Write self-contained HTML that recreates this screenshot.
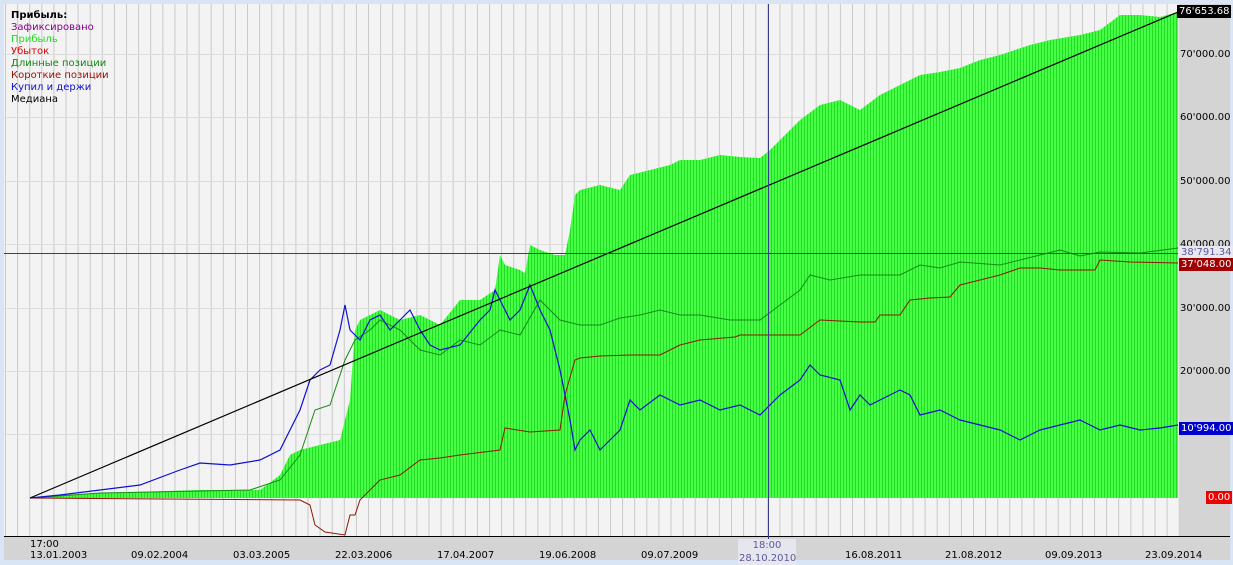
<!DOCTYPE html>
<html><head><meta charset="utf-8"><style>
html,body{margin:0;padding:0;background:#d9e5f4;}
body{width:1233px;height:564px;position:relative;overflow:hidden;font-family:"DejaVu Sans","Liberation Sans",sans-serif;font-size:10px;}
.lg{position:absolute;left:11px;line-height:12px;font-size:10px;}
.ax{position:absolute;font-size:10px;line-height:13px;}
.tag{position:absolute;left:1179px;font-size:10px;line-height:13px;padding:0 2px;}
</style></head><body>
<svg width="1233" height="564" style="position:absolute;left:0;top:0">
<defs>
<pattern id="vg" width="12.1" height="10" patternUnits="userSpaceOnUse" x="5"><rect width="12.1" height="10" fill="#f3f3f3"/><rect x="0" width="1" height="10" fill="#c9c9c9"/></pattern>
<pattern id="gp" width="3" height="10" patternUnits="userSpaceOnUse"><rect width="3" height="10" fill="#44ff44"/><rect width="1" height="10" fill="#28d828"/></pattern>
</defs>
<rect x="4" y="4" width="1175" height="532" fill="url(#vg)"/>
<g stroke="#dcdcdc" stroke-width="1">
<line x1="4" y1="54.5" x2="1178" y2="54.5"/><line x1="4" y1="117.5" x2="1178" y2="117.5"/><line x1="4" y1="181.5" x2="1178" y2="181.5"/><line x1="4" y1="244.5" x2="1178" y2="244.5"/><line x1="4" y1="308.5" x2="1178" y2="308.5"/><line x1="4" y1="371.5" x2="1178" y2="371.5"/><line x1="4" y1="434.5" x2="1178" y2="434.5"/>
</g>
<rect x="1179" y="4" width="51" height="532" fill="#d4d4d4"/>
<rect x="4" y="537" width="1226" height="23" fill="#d4d4d4"/>
<line x1="4" y1="536.5" x2="1230" y2="536.5" stroke="#000"/>
<polygon fill="url(#gp)" points="30,498 100,493 200,490 260,490 280,475 290,455 300,450 320,445 340,440 350,400 355,330 360,320 370,315 380,310 400,320 420,315 440,325 460,300 480,300 495,290 500,255 505,265 520,270 525,273 530,245 540,250 555,255 565,255 570,230 575,195 580,190 600,185 620,190 630,175 650,170 670,165 680,160 700,160 720,155 740,157 760,158 770,150 780,140 790,130 800,120 820,105 840,100 860,110 880,95 900,85 920,75 940,72 960,68 980,60 1000,55 1030,45 1050,40 1080,35 1100,30 1120,15 1140,15 1160,17 1178,12 1178,498"/>
<polyline fill="none" stroke="#148c14" stroke-width="1" points="30,498 100,493 250,490 280,480 300,455 315,410 330,405 345,360 355,340 370,330 380,320 400,330 420,350 440,355 460,340 480,345 500,330 520,335 540,300 560,320 580,325 600,325 620,318 640,315 660,310 680,315 700,315 730,320 760,320 780,305 800,290 810,275 830,280 860,275 900,275 920,265 940,268 960,262 1000,265 1040,255 1060,250 1080,256 1100,252 1140,253 1178,248"/>
<polyline fill="none" stroke="#8b1a00" stroke-width="1" points="30,498 300,500 310,505 315,525 325,532 345,535 350,515 355,515 360,500 370,490 380,480 400,475 420,460 440,458 460,455 500,450 505,428 530,432 560,430 565,395 575,360 580,358 600,356 630,355 660,355 680,345 700,340 735,337 740,335 800,335 820,320 860,322 875,322 880,315 900,315 910,300 930,298 950,297 960,285 980,280 1000,275 1020,268 1040,268 1060,270 1095,270 1100,260 1130,262 1178,263"/>
<polyline fill="none" stroke="#1010d0" stroke-width="1.2" points="30,498 60,495 100,490 140,485 180,470 200,463 230,465 260,460 280,450 290,430 300,410 310,380 320,370 330,365 340,330 345,305 350,330 360,340 370,320 380,315 390,330 400,320 410,310 420,330 430,345 440,350 460,345 480,320 490,310 495,290 500,300 510,320 520,310 530,285 540,310 550,330 560,370 570,420 575,450 580,440 590,430 600,450 610,440 620,430 630,400 640,410 660,395 680,405 700,400 720,410 740,405 760,415 780,395 800,380 810,365 820,375 840,380 850,410 860,395 870,405 880,400 900,390 910,395 920,415 940,410 960,420 980,425 1000,430 1020,440 1040,430 1060,425 1080,420 1100,430 1120,425 1140,430 1160,428 1178,425"/>
<line x1="30" y1="498" x2="1178" y2="12" stroke="#000" stroke-width="1.2"/>
<line x1="4" y1="253.5" x2="1178" y2="253.5" stroke="#3a3a8a"/>
<line x1="768.5" y1="4" x2="768.5" y2="545" stroke="#3a3a8a"/>
</svg>
<div class="lg" style="top:10px;font-weight:bold;color:#000">Прибыль:</div>
<div class="lg" style="top:22px;color:#8b008b">Зафиксировано</div>
<div class="lg" style="top:34px;color:#22dd22">Прибыль</div>
<div class="lg" style="top:46px;color:#dd0000">Убыток</div>
<div class="lg" style="top:58px;color:#118811">Длинные позиции</div>
<div class="lg" style="top:70px;color:#991100">Короткие позиции</div>
<div class="lg" style="top:82px;color:#1010cc">Купил и держи</div>
<div class="lg" style="top:94px;color:#000">Медиана</div>
<div class="ax" style="left:1180px;top:48px">70'000.00</div>
<div class="ax" style="left:1180px;top:111px">60'000.00</div>
<div class="ax" style="left:1180px;top:175px">50'000.00</div>
<div class="ax" style="left:1180px;top:238px">40'000.00</div>
<div class="ax" style="left:1180px;top:302px">30'000.00</div>
<div class="ax" style="left:1180px;top:365px">20'000.00</div>
<div class="tag" style="top:5px;background:#000;color:#fff;left:1177px">76'653.68</div>
<div class="tag" style="top:246px;background:#e8e8ee;color:#5a5a9a">38'791.34</div>
<div class="tag" style="top:258px;background:#a00000;color:#fff">37'048.00</div>
<div class="tag" style="top:422px;background:#0000cc;color:#fff">10'994.00</div>
<div class="tag" style="top:491px;background:#ee0000;color:#fff;left:1206px">0.00</div>
<div class="ax" style="left:30px;top:538px">17:00</div>
<div class="ax" style="left:30px;top:549px">13.01.2003</div>
<div class="ax" style="left:131px;top:549px">09.02.2004</div>
<div class="ax" style="left:233px;top:549px">03.03.2005</div>
<div class="ax" style="left:335px;top:549px">22.03.2006</div>
<div class="ax" style="left:437px;top:549px">17.04.2007</div>
<div class="ax" style="left:539px;top:549px">19.06.2008</div>
<div class="ax" style="left:641px;top:549px">09.07.2009</div>
<div class="ax" style="left:845px;top:549px">16.08.2011</div>
<div class="ax" style="left:945px;top:549px">21.08.2012</div>
<div class="ax" style="left:1045px;top:549px">09.09.2013</div>
<div class="ax" style="left:1145px;top:549px">23.09.2014</div>
<div class="ax" style="left:738px;top:539px;background:#e6e6ee;color:#5a5a9a;padding:0 1px;text-align:center;width:56px">18:00<br>28.10.2010</div>
</body></html>
